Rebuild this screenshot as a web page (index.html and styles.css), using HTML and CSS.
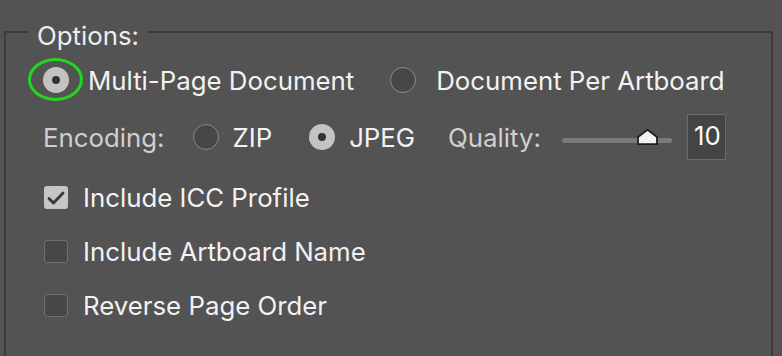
FILE: index.html
```html
<!DOCTYPE html>
<html lang="en">
<head>
  <meta charset="UTF-8" />
  <title>PDF Export Options</title>
  <link rel="stylesheet" href="styles.css">
</head>
<body>

<fieldset class="options">
  <legend>Options:</legend>

  <div class="row layout-row">
    <label class="choice first">
      <span class="radio on"><span class="ring"></span></span>
      Multi-Page Document
    </label>
    <label class="choice second">
      <span class="radio"></span>
      Document Per Artboard
    </label>
  </div>

  <div class="row encoding-row">
    <span class="caption">Encoding:</span>
    <label class="choice zip"><span class="radio"></span>ZIP</label>
    <label class="choice jpeg"><span class="radio on"></span>JPEG</label>
    <span class="caption quality">Quality:</span>
    <div class="slider">
      <svg class="thumb" width="23" height="18" viewBox="0 0 23 18">
        <path d="M2 16.2 L2 9 L11.5 1.8 L21 9 L21 16.2 Z" fill="#f2f2f2" stroke="#1e1e1e" stroke-width="1.8" stroke-linejoin="round"/>
      </svg>
    </div>
    <div class="quality-box">10</div>
  </div>

  <label class="check-row">
    <span class="box on">
      <svg width="24" height="24" viewBox="0 0 24 24">
        <path d="M5 12.5 L9.5 17 L19 7" fill="none" stroke="#3a3a3a" stroke-width="3" stroke-linecap="round" stroke-linejoin="round"/>
      </svg>
    </span>
    Include ICC Profile
  </label>
  <label class="check-row">
    <span class="box"></span>
    Include Artboard Name
  </label>
  <label class="check-row">
    <span class="box"></span>
    Reverse Page Order
  </label>
</fieldset>

</body>
</html>
```

FILE: styles.css
```css
body {
  margin: 0;
  background: #535353;
  font-family: 'Inter', 'Liberation Sans', sans-serif;
  font-size: 25.8px;
  color: #f2f2f2;
  height: 356px;
  overflow: hidden;
}

.options {
  margin: 13px 0 0 4px;
  width: 769px;
  height: 343px;
  box-sizing: border-box;
  border: 2px solid #3c3c3c;
  border-bottom: none;
  padding: 0 0 0 37px;
}

.options legend {
  padding: 9px 8px 0;
  margin-left: -14px;
  line-height: 28px;
  color: #ededed;
}

.row {
  display: flex;
  align-items: center;
}

.layout-row {
  height: 40px;
  margin-top: 10px;
}

.encoding-row {
  height: 46px;
  margin-top: 14px;
}

.choice {
  display: flex;
  align-items: center;
}

.radio {
  width: 26px;
  height: 26px;
  box-sizing: border-box;
  border-radius: 50%;
  border: 1.5px solid #8a8a8a;
  background: #474747;
  margin-right: 19px;
  position: relative;
}

.radio.on {
  border: none;
  background: #c3c3c3;
}

.radio.on::after {
  content: "";
  position: absolute;
  left: 9px;
  top: 9px;
  width: 8px;
  height: 8px;
  border-radius: 50%;
  background: #333;
}

.ring {
  position: absolute;
  left: -15px;
  top: -9px;
  width: 55px;
  height: 43px;
  box-sizing: border-box;
  border: 3px solid #22d622;
  border-radius: 50%;
}

.second {
  margin-left: 36px;
}

.second .radio {
  margin-right: 20px;
}

.caption {
  color: #cfcfcf;
}

.zip {
  margin-left: 28px;
}

.zip .radio,
.jpeg .radio {
  margin-right: 14px;
}

.jpeg {
  margin-left: 37px;
}

.quality {
  margin-left: 33px;
}

.slider {
  position: relative;
  margin-left: 21px;
  width: 110px;
  height: 5px;
  border-radius: 3px;
  background: #7a7a7a;
  margin-top: 6px;
}

.thumb {
  position: absolute;
  left: 74px;
  top: -10px;
}

.quality-box {
  margin-left: 15px;
  width: 39px;
  height: 46px;
  box-sizing: border-box;
  border: 1px solid #6b6b6b;
  background: #444;
  color: #fafafa;
  padding: 6px 0 0 6px;
  line-height: 30px;
}

.check-row {
  display: flex;
  align-items: center;
  height: 54px;
  margin-left: 1px;
}

.encoding-row + .check-row {
  margin-top: 10px;
}

.box {
  width: 24px;
  height: 23px;
  box-sizing: border-box;
  border: 1.5px solid #707070;
  border-radius: 3px;
  background: #474747;
  margin-right: 15px;
}

.box.on {
  border: none;
  background: #c6c6c6;
}

.box svg {
  display: block;
}
```
